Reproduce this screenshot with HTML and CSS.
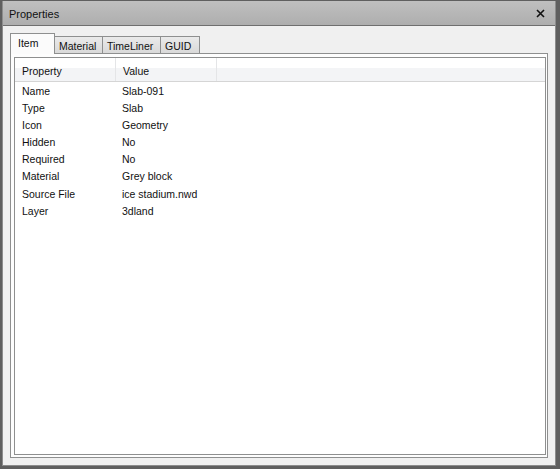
FILE: index.html
```html
<!DOCTYPE html>
<html>
<head>
<meta charset="utf-8">
<link rel="stylesheet" href="styles.css">
</head>
<body>
<div class="window">
  <div class="titlebar">
    <span class="title">Properties</span>
    <svg class="close" width="9" height="9" viewBox="0 0 9 9"><path d="M1 1 L8 8 M8 1 L1 8" stroke="#111" stroke-width="1.6" fill="none"/></svg>
  </div>
  <div class="content">
    <div class="tabs">
      <div class="tab active">Item</div>
      <div class="tab">Material</div>
      <div class="tab">TimeLiner</div>
      <div class="tab">GUID</div>
    </div>
    <div class="panel">
      <div class="list">
        <div class="header">
          <div class="hcell c1">Property</div>
          <div class="hcell c2">Value</div>
          <div class="hcell c3"></div>
        </div>
        <div class="rows">
          <div class="row"><span class="c1">Name</span><span class="c2">Slab-091</span></div>
          <div class="row"><span class="c1">Type</span><span class="c2">Slab</span></div>
          <div class="row"><span class="c1">Icon</span><span class="c2">Geometry</span></div>
          <div class="row"><span class="c1">Hidden</span><span class="c2">No</span></div>
          <div class="row"><span class="c1">Required</span><span class="c2">No</span></div>
          <div class="row"><span class="c1">Material</span><span class="c2">Grey block</span></div>
          <div class="row"><span class="c1">Source File</span><span class="c2">ice stadium.nwd</span></div>
          <div class="row"><span class="c1">Layer</span><span class="c2">3dland</span></div>
        </div>
      </div>
    </div>
  </div>
</div>
</body>
</html>
```
FILE: styles.css
```css
html, body {
  margin: 0;
  padding: 0;
  width: 560px;
  height: 469px;
  overflow: hidden;
  background: #5c5c5c;
  font-family: "Liberation Sans", Arial, sans-serif;
  color: #111;
}
.window {
  box-sizing: border-box;
  width: 560px;
  height: 469px;
  display: flex;
  flex-direction: column;
  border-left: 2px solid #5f5f5f;
  border-right: 4px solid #5f5f5f;
  border-bottom: 3px solid #5f5f5f;
  border-top: 1px solid #5f5f5f;
  background: #8c8c8c;
  padding: 0 1px 1px 1px;
}
.titlebar {
  height: 24px;
  flex: none;
  display: flex;
  align-items: center;
  justify-content: space-between;
  padding: 0 10px 0 6px;
  background: linear-gradient(#bfbfbf, #aeaeae);
  border-bottom: 1px solid #6f6f6f;
}
.title {
  font-size: 11px;
  color: #111;
  padding-top: 2px;
}
.close {
  display: block;
}
.content {
  flex: 1;
  background: #f0f0f0;
  padding: 7px 7px 7px 7px;
  display: flex;
  flex-direction: column;
}
.tabs {
  display: flex;
  align-items: flex-end;
  height: 20px;
  flex: none;
  position: relative;
  z-index: 1;
}
.tab {
  box-sizing: border-box;
  height: 17px;
  font-size: 10.5px;
  padding: 3px 0 0 4px;
  border: 1px solid #8e8f8f;
  border-bottom: none;
  border-left: none;
  background: linear-gradient(#eaeaea, #d9d9d9);
}
.tab:nth-child(2) { width: 48px; }
.tab:nth-child(3) { width: 58px; }
.tab:nth-child(4) { width: 39px; }
.tab.active {
  width: 45px;
  height: 21px;
  margin-bottom: -1px;
  border-left: 1px solid #8e8f8f;
  background: #fbfbfb;
  padding: 3px 0 0 7px;
}
.panel {
  flex: 1;
  border: 1px solid #8e8f8f;
  background: #fdfdfd;
  padding: 3px 1px 2px 3px;
  display: flex;
}
.list {
  flex: 1;
  border: 1px solid #8e8f8f;
  background: #fff;
  display: flex;
  flex-direction: column;
}
.header {
  display: flex;
  height: 23px;
  flex: none;
  background: linear-gradient(#ffffff 0, #ffffff 45%, #f3f4f6 45%, #f3f4f6 100%);
  border-bottom: 1px solid #d5d5d5;
}
.hcell {
  box-sizing: border-box;
  font-size: 10.5px;
  padding: 7px 0 0 7px;
  border-right: 1px solid #e4e5e7;
}
.hcell.c1 { width: 101px; }
.hcell.c2 { width: 101px; }
.hcell.c3 { flex: 1; border-right: none; }
.rows {
  padding-top: 1px;
}
.row {
  display: flex;
  height: 17.1px;
  font-size: 10.5px;
  line-height: 17px;
}
.row .c1 { width: 100px; padding-left: 7px; }
.row .c2 { padding-left: 0; }
```
